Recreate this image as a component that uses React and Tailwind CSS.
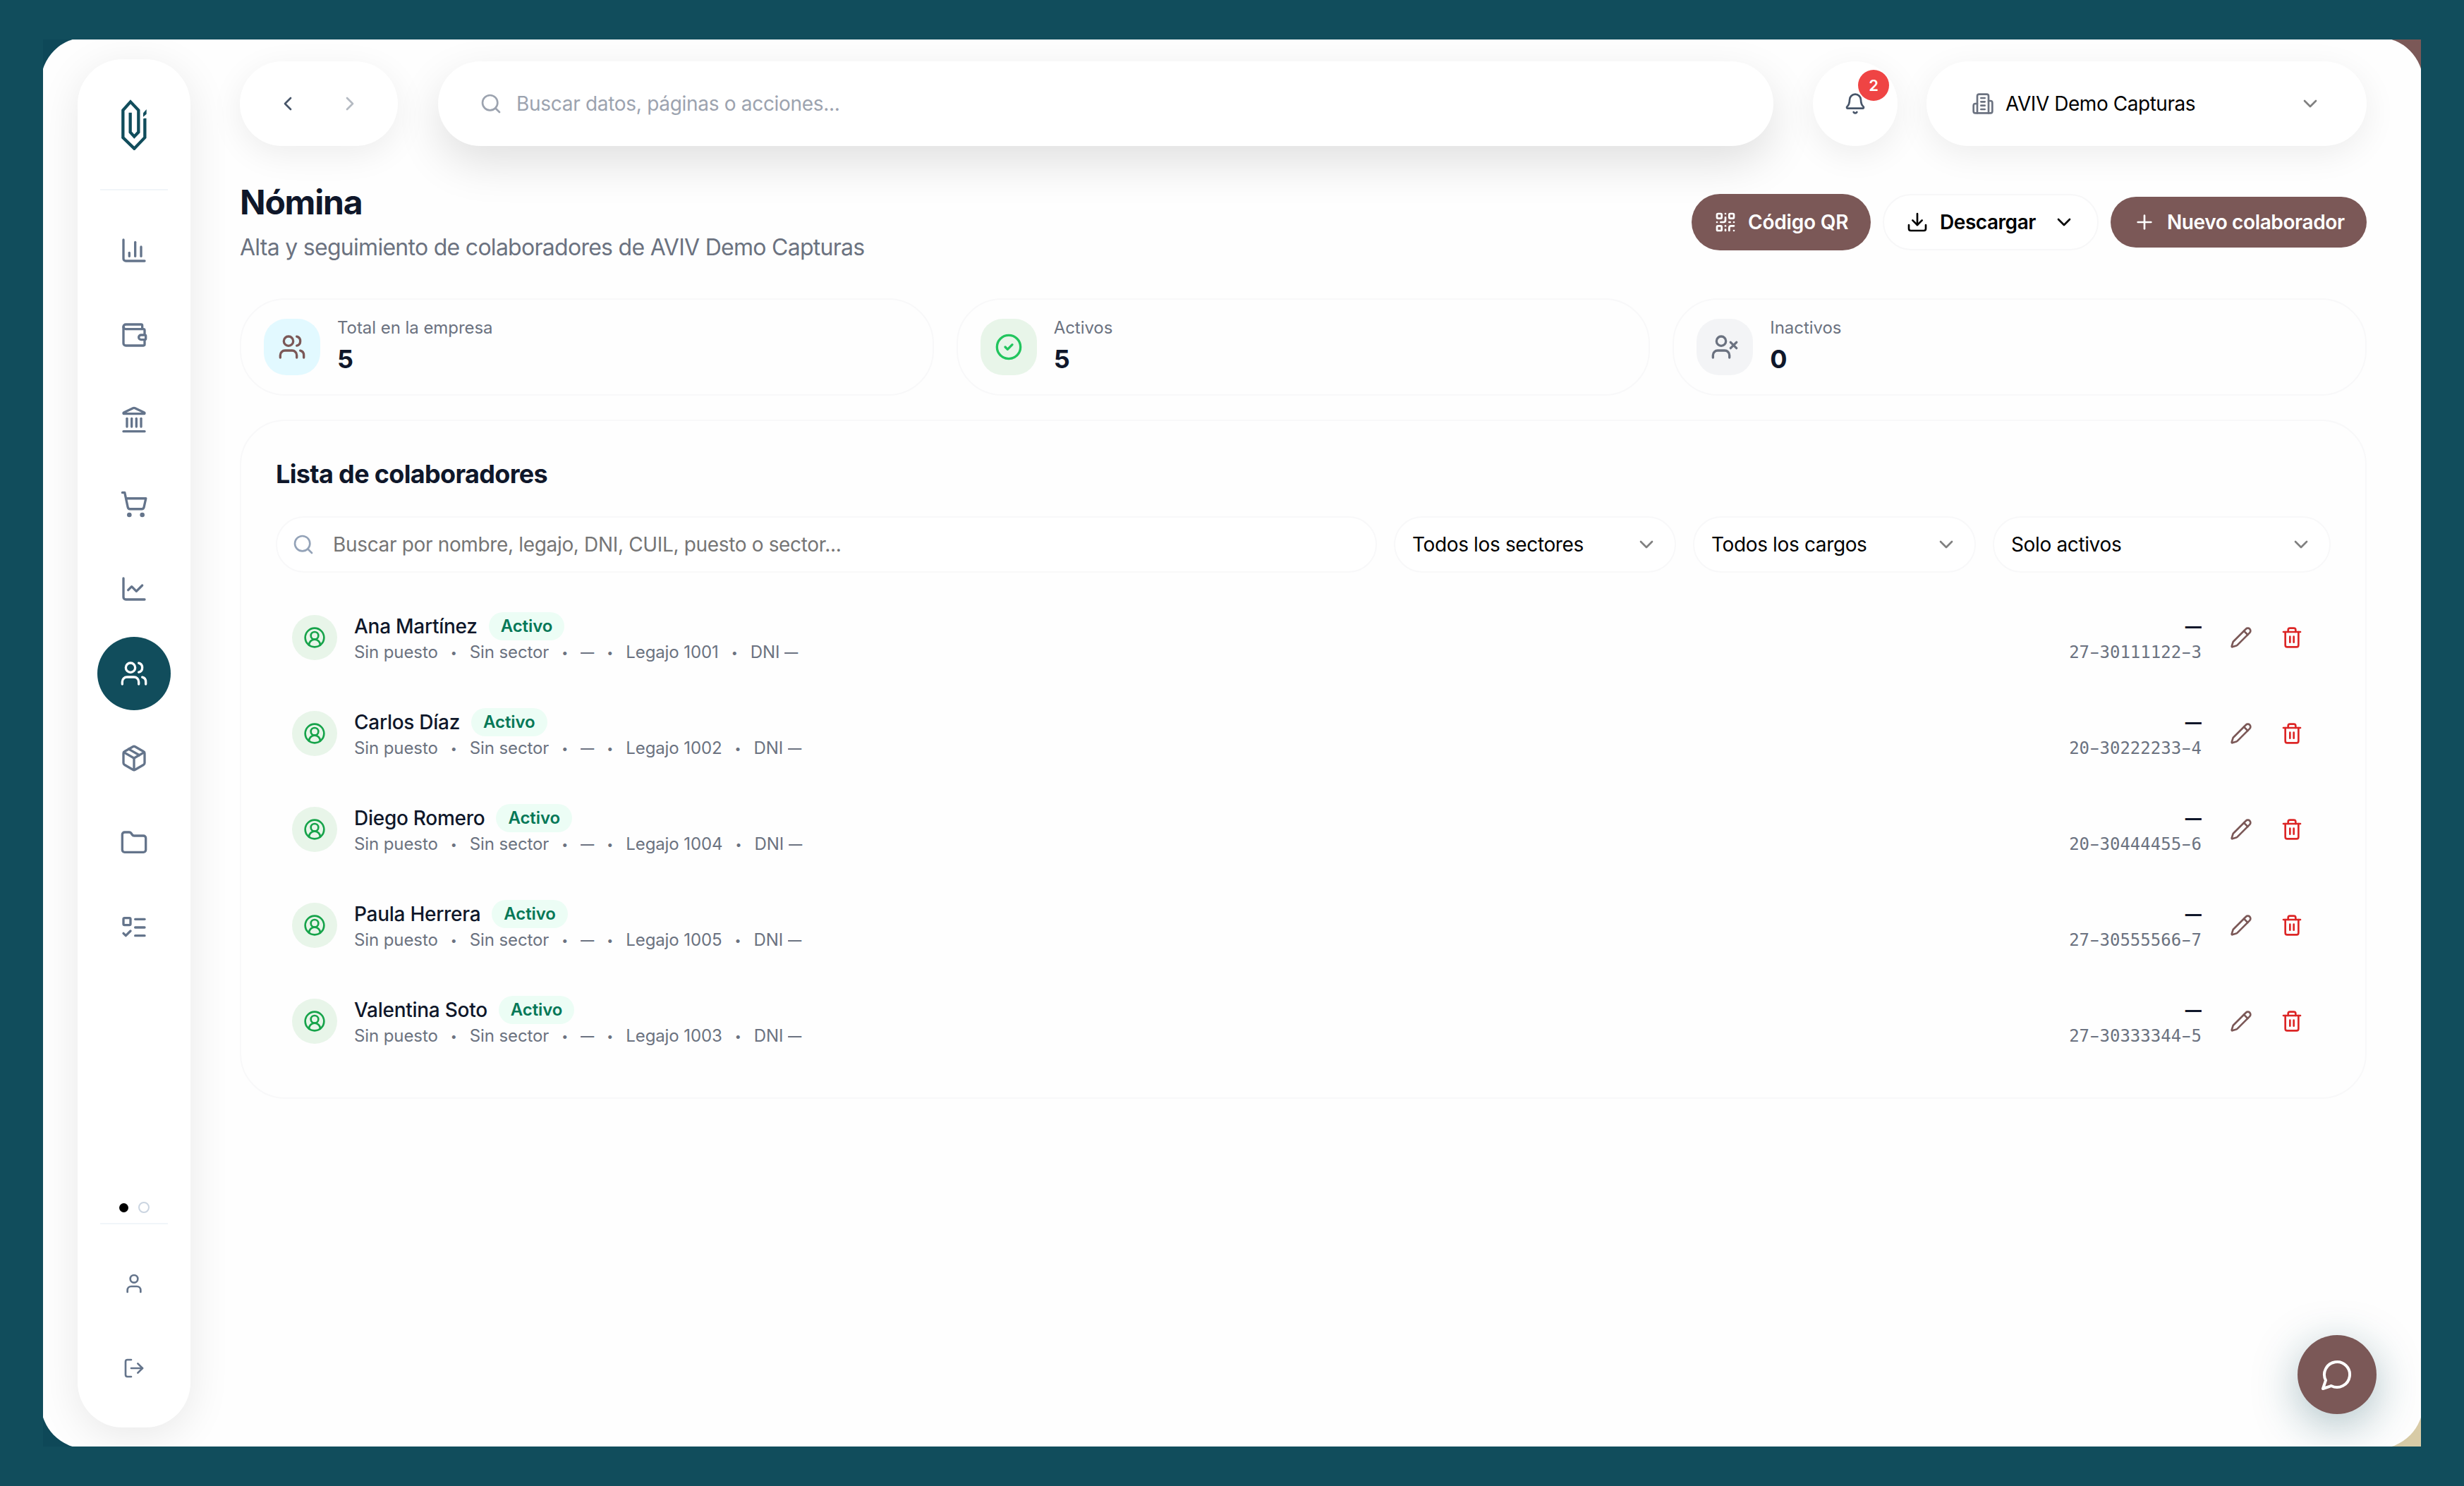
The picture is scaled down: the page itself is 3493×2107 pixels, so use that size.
import React from 'react'
import clsx from 'clsx'
import {
  Bell,
  ChartColumn,
  ChartLine,
  ChevronDown,
  ChevronLeft,
  ChevronRight,
  CircleCheck,
  CircleUserRound,
  Download,
  Folder,
  Landmark,
  ListTodo,
  LogOut,
  Package,
  Pencil,
  Plus,
  QrCode,
  Search,
  ShoppingCart,
  Trash2,
  User,
  UserX,
  Users,
  Wallet
} from 'lucide-react'

const navItems = [
  { id: 'panel', icon: ChartColumn },
  { id: 'caja', icon: Wallet },
  { id: 'bancos', icon: Landmark },
  { id: 'compras', icon: ShoppingCart },
  { id: 'reportes', icon: ChartLine },
  { id: 'nomina', icon: Users },
  { id: 'stock', icon: Package },
  { id: 'archivos', icon: Folder },
  { id: 'tareas', icon: ListTodo }
]

const stats = [
  { label: 'Total en la empresa', value: 5, icon: Users, tile: 'bg-[#e2f9ff] text-[#7b5857]' },
  { label: 'Activos', value: 5, icon: CircleCheck, tile: 'bg-[#e8f5e9] text-[#22c55e]' },
  { label: 'Inactivos', value: 0, icon: UserX, tile: 'bg-[#f3f4f6] text-[#6b7280]' }
]

const employees = [
  { name: 'Ana Martínez', legajo: '1001', cuil: '27-30111122-3' },
  { name: 'Carlos Díaz', legajo: '1002', cuil: '20-30222233-4' },
  { name: 'Diego Romero', legajo: '1004', cuil: '20-30444455-6' },
  { name: 'Paula Herrera', legajo: '1005', cuil: '27-30555566-7' },
  { name: 'Valentina Soto', legajo: '1003', cuil: '27-30333344-5' }
]

const Logo = () => (
  <svg viewBox="36 30 108 216" className="h-[72px] w-9" fill="none">
    <path
      d="M136 110V192L91 239L43 192V76L75 40L109 76V169L91 188L74 169V86"
      stroke="#114d5c"
      strokeWidth="13"
    />
    <path d="M129 88L143 72V92L129 104Z" fill="#114d5c" />
    <path d="M127 112L145 97" stroke="#fff" strokeWidth="4" />
  </svg>
)

const Building = ({ className }) => (
  <svg
    viewBox="0 0 24 24"
    className={className}
    fill="none"
    stroke="currentColor"
    strokeWidth="2"
    strokeLinecap="round"
    strokeLinejoin="round"
  >
    <path d="M6 22V4a2 2 0 0 1 2-2h8a2 2 0 0 1 2 2v18Z" />
    <path d="M6 12H4a2 2 0 0 0-2 2v6a2 2 0 0 0 2 2h2" />
    <path d="M18 9h2a2 2 0 0 1 2 2v9a2 2 0 0 1-2 2h-2" />
    <path d="M10 6h4M10 10h4M10 14h4M10 18h4" />
  </svg>
)

const ChatBubble = () => (
  <svg
    viewBox="0 0 24 24"
    className="size-12"
    fill="none"
    stroke="currentColor"
    strokeWidth="2"
    strokeLinecap="round"
    strokeLinejoin="round"
  >
    <path d="M7.9 20A9 9 0 1 0 4 16.1L2 22Z" />
  </svg>
)

const Sidebar = () => (
  <aside className="flex h-[1940px] w-[160px] shrink-0 flex-col items-center rounded-[64px] bg-white pt-[57px] pb-8 shadow-[0_12px_60px_rgba(0,0,0,0.09)]">
    <Logo />
    <div className="mt-[55px] h-0.5 w-24 bg-[#f1f5f9]" />
    <nav className="mt-[33px] flex flex-col gap-4">
      {navItems.map(({ id, icon: Icon }) => (
        <button
          key={id}
          className={clsx(
            'flex size-[104px] items-center justify-center rounded-full',
            id === 'nomina' ? 'bg-[#114d5c] text-white' : 'text-[#64748b]'
          )}
        >
          <Icon className="size-10" />
        </button>
      ))}
    </nav>
    <div className="mt-auto flex items-center gap-[14px]">
      <span className="size-[13px] rounded-full bg-black" />
      <span className="size-4 rounded-full border-2 border-[#cbd5e1]" />
    </div>
    <div className="mt-[14px] h-0.5 w-24 bg-[#f1f5f9]" />
    <div className="mt-8 flex flex-col gap-4 text-[#64748b]">
      <button className="flex size-[104px] items-center justify-center">
        <User className="size-8" />
      </button>
      <button className="flex size-[104px] items-center justify-center">
        <LogOut className="size-8" />
      </button>
    </div>
  </aside>
)

const TopBar = () => (
  <header className="flex h-[120px] text-[28px]">
    <div className="flex w-[224px] items-center justify-center gap-2 rounded-full bg-white text-[#475569] shadow-[0_12px_48px_rgba(0,0,0,0.07)]">
      <button className="flex size-20 items-center justify-center">
        <ChevronLeft className="size-8" />
      </button>
      <button className="flex size-20 items-center justify-center opacity-40">
        <ChevronRight className="size-8" />
      </button>
    </div>
    <div className="mr-14 ml-[57px] flex flex-1 items-center gap-5 rounded-full bg-white pl-[59px] text-[#9ca3af] shadow-[0_24px_64px_rgba(0,0,0,0.12)]">
      <Search className="size-8" />
      <span className="tracking-[-0.3px]">Buscar datos, páginas o acciones...</span>
    </div>
    <button className="relative mr-[41px] flex w-[120px] items-center justify-center rounded-full bg-white text-[#475569] shadow-[0_12px_48px_rgba(0,0,0,0.07)]">
      <Bell className="size-8" />
      <span className="absolute top-3 right-3 flex size-11 items-center justify-center rounded-full bg-[#ef4444] text-[22px] font-semibold text-white">
        2
      </span>
    </button>
    <div className="flex w-[624px] items-center rounded-full bg-white px-16 text-black shadow-[0_12px_48px_rgba(0,0,0,0.07)]">
      <Building className="size-8 text-[#6b7280]" />
      <span className="ml-4 tracking-[-0.45px]">AVIV Demo Capturas</span>
      <ChevronDown className="ml-auto size-8 text-[#808080]" />
    </div>
  </header>
)

const PageTitle = () => (
  <div className="mt-12 flex items-center justify-between">
    <div>
      <h1 className="text-[48px] leading-[64px] font-bold tracking-[-1.2px] text-[#0f172a]">Nómina</h1>
      <p className="mt-2 text-[32px] leading-[48px] tracking-[-0.72px] text-[#6b7280]">
        Alta y seguimiento de colaboradores de AVIV Demo Capturas
      </p>
    </div>
    <div className="flex items-center gap-[17px] text-[28px] font-semibold">
      <button className="flex h-20 w-[254px] items-center gap-4 rounded-full bg-[#7b5857] pl-8 tracking-[-0.2px] text-white">
        <QrCode className="size-8" />
        Código QR
      </button>
      <button className="flex h-20 w-[306px] items-center rounded-full border-2 border-[#f7f7f8] bg-white pl-[31px] tracking-[-0.45px] text-black">
        <Download className="size-8" />
        <span className="ml-4">Descargar</span>
        <ChevronDown className="ml-6 size-8" />
      </button>
      <button className="flex h-[72px] w-[363px] items-center gap-4 rounded-full bg-[#7b5857] pl-8 tracking-[-0.39px] text-white">
        <Plus className="size-8" />
        Nuevo colaborador
      </button>
    </div>
  </div>
)

const StatCard = ({ label, value, icon: Icon, tile }) => (
  <div className="flex h-[138px] items-center gap-6 rounded-[64px] border-2 border-[#f8f8f9] px-8">
    <div className={clsx('flex size-20 items-center justify-center rounded-[32px]', tile)}>
      <Icon className="size-10" />
    </div>
    <div className="pb-[3px]">
      <p className="text-[24px] leading-8 tracking-[-0.05px] text-[#6b7280]">{label}</p>
      <p className="mt-1 text-[36px] leading-[48px] font-bold text-[#0f172a]">{value}</p>
    </div>
  </div>
)

const Select = ({ label, className }) => (
  <div
    className={clsx(
      'flex h-20 shrink-0 items-center justify-between rounded-full border-2 border-[#f8f8f9] bg-white px-6 text-black',
      className
    )}
  >
    <span className="tracking-[-0.36px]">{label}</span>
    <ChevronDown className="size-8 text-[#808080]" />
  </div>
)

const Dash = () => <span className="inline-block w-[19px] origin-left scale-x-[0.8]">—</span>

const Dot = () => <span className="w-[13px] text-center text-base leading-8">•</span>

// the hyphens are stretched to fill their monospace cell
const Cuil = ({ value }) => (
  <span className="mt-px font-['DejaVu_Sans_Mono',monospace] text-[24px] leading-8 text-[#6b7280]">
    {value.split('-').map((part, i) => (
      <React.Fragment key={i}>
        {i > 0 && <span className="inline-block scale-x-[1.7]">-</span>}
        {part}
      </React.Fragment>
    ))}
  </span>
)

const EmployeeRow = ({ name, legajo, cuil }) => (
  <li className="flex h-[136px] items-center px-[23px]">
    <div className="flex size-16 items-center justify-center rounded-full bg-[#e8f5e9] text-[#16a34a]">
      <CircleUserRound className="size-8" />
    </div>
    <div className="ml-6">
      <div className="flex h-10 items-center gap-4">
        <span className="text-[28px] font-medium tracking-[-0.27px] text-[#0f172a]">{name}</span>
        <span className="flex h-10 items-center rounded-full bg-[#ecfdf5] px-[17px] text-[24px] font-semibold tracking-[-0.09px] text-[#047857]">
          Activo
        </span>
      </div>
      <div className="mt-px flex h-8 items-center gap-4 text-[24px] leading-8 tracking-[-0.1px] text-[#6b7280]">
        <span>Sin puesto</span>
        <Dot />
        <span>Sin sector</span>
        <Dot />
        <Dash />
        <Dot />
        <span>Legajo {legajo}</span>
        <Dot />
        <span>DNI <Dash /></span>
      </div>
    </div>
    <div className="ml-auto flex flex-col items-end">
      <span className="origin-right scale-x-[0.83] text-[28px] leading-10 font-semibold text-[#0f172a]">—</span>
      <Cuil value={cuil} />
    </div>
    <div className="ml-6 flex gap-2">
      <button className="flex size-16 items-center justify-center text-[#7b5857]">
        <Pencil className="size-8" />
      </button>
      <button className="flex size-16 items-center justify-center text-[#dc2626]">
        <Trash2 className="size-8" />
      </button>
    </div>
  </li>
)

const EmployeeList = () => (
  <section className="mt-[34px] h-[963px] rounded-[64px] border-2 border-[#f8f8f9] px-[49px] pt-[47px]">
    <h2 className="text-[36px] leading-[56px] font-[650] tracking-[-0.66px] text-[#0f172a]">
      Lista de colaboradores
    </h2>
    <div className="mt-8 flex gap-6 text-[28px]">
      <div className="flex h-20 flex-1 items-center gap-[26px] rounded-full border-2 border-[#f8f8f9] bg-white pl-[21px] text-[#757575]">
        <Search className="size-8 text-[#94a3b8]" />
        <span className="tracking-[-0.34px]">Buscar por nombre, legajo, DNI, CUIL, puesto o sector...</span>
      </div>
      <Select label="Todos los sectores" className="w-[400px]" />
      <Select label="Todos los cargos" className="w-[401px]" />
      <Select label="Solo activos" className="w-[479px]" />
    </div>
    <ul className="mt-6">
      {employees.map((e) => (
        <EmployeeRow key={e.legajo} {...e} />
      ))}
    </ul>
  </section>
)

export default function App() {
  return (
    <div className="h-[2107px] w-[3493px] overflow-hidden bg-[#114d5c] pt-14 pl-[61px] font-[Inter,'Noto_Sans',sans-serif]">
      {/* each corner behind the rounded panel has its own colour */}
      <div className="h-[1995px] w-[3371px] overflow-hidden bg-[conic-gradient(#7b5857_0_25%,#d8cba6_25%_50%,#0e4858_50%)]">
        <div className="relative -mt-[3px] -ml-[3px] flex h-[2001px] w-[3377px] rounded-[64px] bg-[#fefefe] pt-[31px] pr-20 pl-[52px]">
          <Sidebar />
          <main className="ml-[70px] flex-1 pt-[3px]">
            <TopBar />
            <PageTitle />
            <div className="mt-12 grid grid-cols-3 gap-8">
              {stats.map((s) => (
                <StatCard key={s.label} {...s} />
              ))}
            </div>
            <EmployeeList />
          </main>
          <button className="absolute right-[66px] bottom-[49px] flex size-28 items-center justify-center rounded-full bg-[#7b5857] text-white shadow-[0_16px_64px_rgba(17,77,92,0.35)]">
            <ChatBubble />
          </button>
        </div>
      </div>
    </div>
  )
}
